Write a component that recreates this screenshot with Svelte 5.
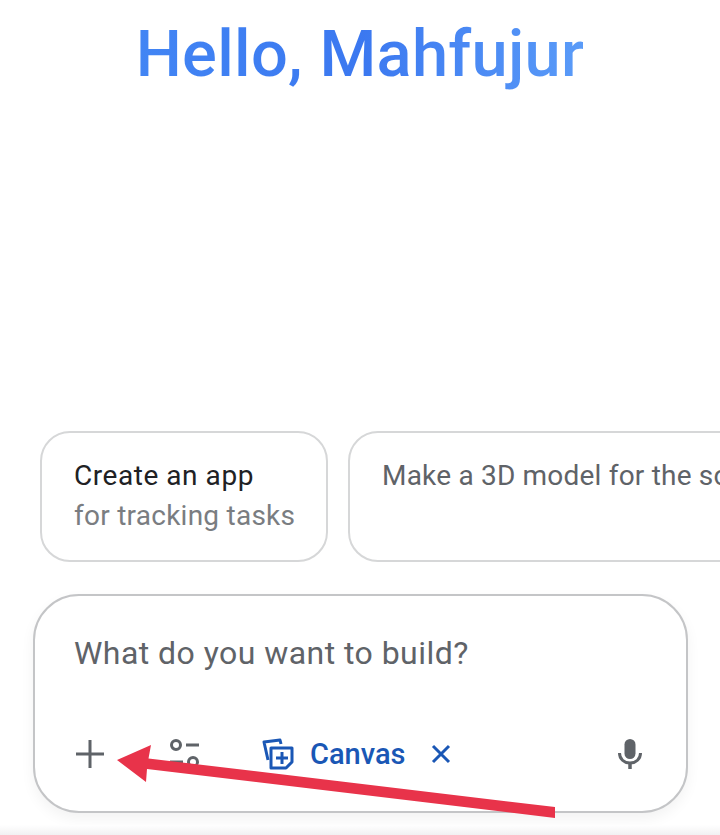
<script>
  let prompt = 'What do you want to build?';
  const chips = [
    { title: 'Create an app', sub: 'for tracking tasks' },
    { title: '', sub: 'Make a 3D model for the solar system' }
  ];
</script>

<div class="page">
  <h1 class="greeting">Hello, Mahfujur</h1>

  <div class="chips">
    {#each chips as chip}
      <div class="chip" class:wide={!chip.title}>
        {#if chip.title}
          <span class="chip-title">{chip.title}</span>
          <span class="chip-sub">{chip.sub}</span>
        {:else}
          <span class="chip-plain">{chip.sub}</span>
        {/if}
      </div>
    {/each}
  </div>

  <div class="composer">
    <p class="placeholder">{prompt}</p>
    <div class="tools">
      <svg class="icon plus" width="32" height="32" viewBox="0 0 32 32">
        <path d="M16 2v28M2 16h28" fill="none" stroke="#5f6368" stroke-width="3" />
      </svg>
      <svg class="icon tune" width="34" height="32" viewBox="0 0 34 32">
        <circle cx="8" cy="7" r="4.500" fill="none" stroke="#5f6368" stroke-width="3" />
        <path d="M18 7h13M2 24h13" fill="none" stroke="#5f6368" stroke-width="3" />
        <circle cx="25" cy="24" r="4.500" fill="none" stroke="#5f6368" stroke-width="3" />
      </svg>
      <div class="canvas">
        <svg width="34" height="34" viewBox="0 0 34 34">
          <path d="M7 23 3 5l16-2 1 4" fill="none" stroke="#1a57b5" stroke-width="3" stroke-linejoin="round" />
          <path d="M10 11h21v14l-6 6H10z" fill="none" stroke="#1a57b5" stroke-width="3" stroke-linejoin="round" />
          <path d="M21 15v12M15 21h12" fill="none" stroke="#1a57b5" stroke-width="3" />
        </svg>
        <span>Canvas</span>
        <svg class="close" width="20" height="20" viewBox="0 0 20 20">
          <path d="M2 2l16 16M18 2 2 18" fill="none" stroke="#1a57b5" stroke-width="3" />
        </svg>
      </div>
      <svg class="icon mic" width="26" height="32" viewBox="0 0 26 32">
        <rect x="7.500" y="1" width="11" height="20" rx="5.500" fill="#5f6368" />
        <path d="M2.500 15c0 6 4.500 10 10.500 10s10.500-4 10.500-10" fill="none" stroke="#5f6368" stroke-width="3" />
        <path d="M13 24v7" stroke="#5f6368" stroke-width="3.500" />
      </svg>
    </div>
  </div>

  <div class="bottom-edge"></div>

  <svg class="arrow" width="720" height="835" viewBox="0 0 720 835">
    <polygon points="117,760 151,745 148.500,758.500 555,807 555,818 147,769 146,782" fill="#e8334a" />
  </svg>
</div>

<style>
  :global(body) {
    background: #fff;
  }

  .page {
    position: relative;
    width: 720px;
    height: 835px;
    overflow: hidden;
    background: #fff;
    font-family: Roboto, "Noto Sans", sans-serif;
  }

  .greeting {
    margin: 0;
    padding-top: 15px;
    height: 418px;
    box-sizing: border-box;
    text-align: center;
    font-size: 65px;
    line-height: 78px;
    font-weight: 500;
    letter-spacing: 0.3px;
    background: linear-gradient(90deg, #4285f4 0%, #3b78f0 50%, #5a9bf8 100%);
    background-size: 446px 100%;
    background-position: center;
    background-repeat: no-repeat;
    -webkit-background-clip: text;
    background-clip: text;
    color: transparent;
  }

  .chips {
    display: flex;
    gap: 20px;
    padding-left: 40px;
    margin-top: 13px;
    height: 131px;
  }

  .chip {
    flex: none;
    box-sizing: border-box;
    width: 288px;
    height: 131px;
    padding: 23px 32px;
    border: 2px solid #d6d7d8;
    border-radius: 30px;
    display: flex;
    flex-direction: column;
    font-size: 28px;
    line-height: 40px;
    white-space: nowrap;
  }

  .chip.wide {
    width: 520px;
  }

  .chip-title {
    color: #202124;
    letter-spacing: 0.55px;
  }

  .chip-sub {
    color: #7a7d81;
    letter-spacing: 0.25px;
  }

  .chip-plain {
    color: #5f6368;
    letter-spacing: 0.2px;
  }

  .composer {
    box-sizing: border-box;
    width: 655px;
    height: 219px;
    margin: 32px 0 0 33px;
    padding: 33px 39px 0;
    background: #fff;
    border: 2px solid #c4c5c7;
    border-radius: 46px;
    box-shadow: 0 6px 14px rgba(0, 0, 0, 0.05);
  }

  .placeholder {
    margin: 0;
    font-size: 32px;
    line-height: 48px;
    color: #5f6368;
    letter-spacing: 0.45px;
  }

  .tools {
    display: flex;
    align-items: center;
    margin-top: 57px;
    height: 40px;
  }

  .icon {
    flex: none;
  }

  .tune {
    margin-left: 62px;
  }

  .canvas {
    display: flex;
    align-items: center;
    margin-left: 59px;
    color: #1a57b5;
    font-size: 29px;
    font-weight: 500;
  }

  .canvas span {
    margin-left: 15px;
  }

  .close {
    margin-left: 26px;
  }

  .mic {
    margin-left: auto;
    margin-right: 4px;
  }

  .bottom-edge {
    position: absolute;
    left: 0;
    right: 0;
    bottom: 0;
    height: 10px;
    background: linear-gradient(#fff, #f1f1f2);
  }

  .arrow {
    position: absolute;
    left: 0;
    top: 0;
  }
</style>
